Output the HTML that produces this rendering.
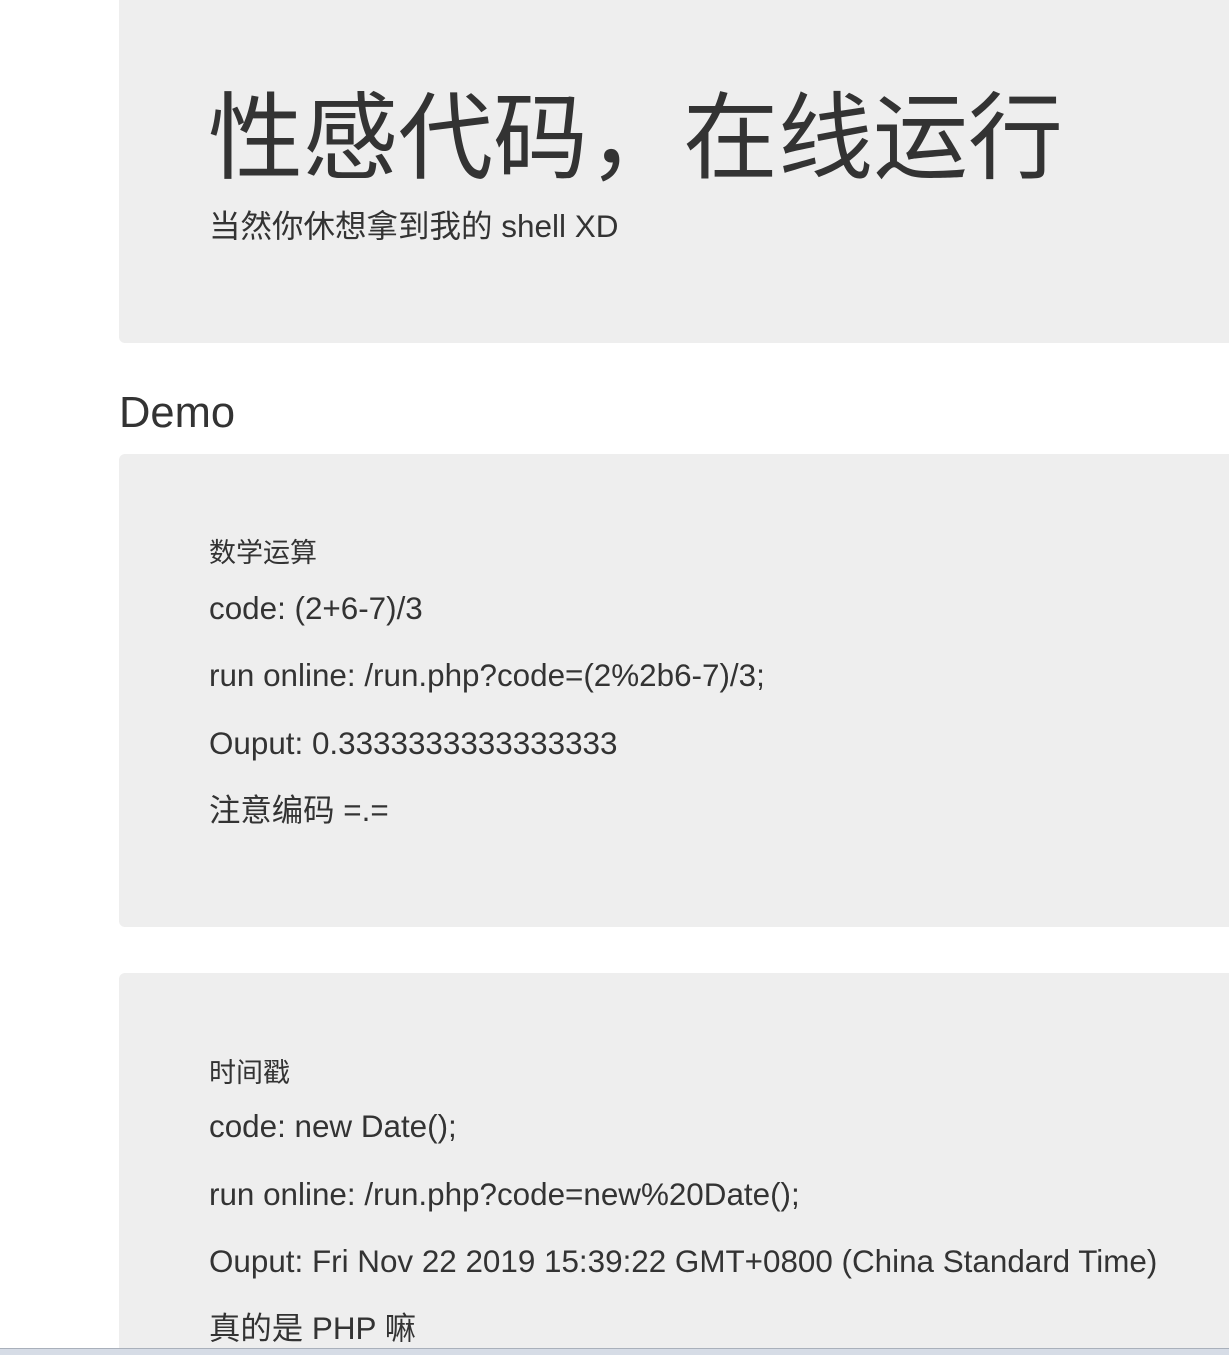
<!DOCTYPE html>
<html style="margin:0;height:1355px;overflow:hidden"><head><meta charset="utf-8"><style>
body{margin:0;width:1229px;height:1355px;overflow:hidden;background:#fff;position:relative;font-family:"Liberation Sans","Noto Sans CJK SC",sans-serif;color:#333}
.box{position:absolute;left:119px;width:1200px;background:#eee;border-radius:6px}
.t{position:absolute;white-space:nowrap;line-height:1}
</style></head><body>
<div class="box" style="top:-10px;height:353px"></div>
<div class="t" style="left:208px;top:92px;font-size:95px;">性感代码，在线运行</div>
<div class="t" style="left:209px;top:211px;font-size:31.5px;">当然你休想拿到我的 shell XD</div>
<div class="t" style="left:119px;top:392px;font-size:43.5px;">Demo</div>
<div class="box" style="top:454px;height:473px"></div>
<div class="t" style="left:209px;top:540px;font-size:27px;">数学运算</div>
<div class="t" style="left:209px;top:593px;font-size:31.4px;">code: (2+6-7)/3</div>
<div class="t" style="left:209px;top:660px;font-size:31.4px;">run online: /run.php?code=(2%2b6-7)/3;</div>
<div class="t" style="left:209px;top:728px;font-size:31.4px;">Ouput: 0.3333333333333333</div>
<div class="t" style="left:209px;top:795px;font-size:31.4px;">注意编码 =.=</div>
<div class="box" style="top:973px;height:382px;border-radius:6px 6px 0 0"></div>
<div class="t" style="left:209px;top:1060px;font-size:27px;">时间戳</div>
<div class="t" style="left:209px;top:1111px;font-size:31.4px;">code: new Date();</div>
<div class="t" style="left:209px;top:1179px;font-size:31.4px;">run online: /run.php?code=new%20Date();</div>
<div class="t" style="left:209px;top:1246px;font-size:31.4px;">Ouput: Fri Nov 22 2019 15:39:22 GMT+0800 (China Standard Time)</div>
<div class="t" style="left:209px;top:1313px;font-size:31.4px;">真的是 PHP 嘛</div>
<div style="position:absolute;left:0;top:1348px;width:1229px;height:7px;background:#d6dce6;border-top:1px solid #a9b0bb"></div>
</body></html>
